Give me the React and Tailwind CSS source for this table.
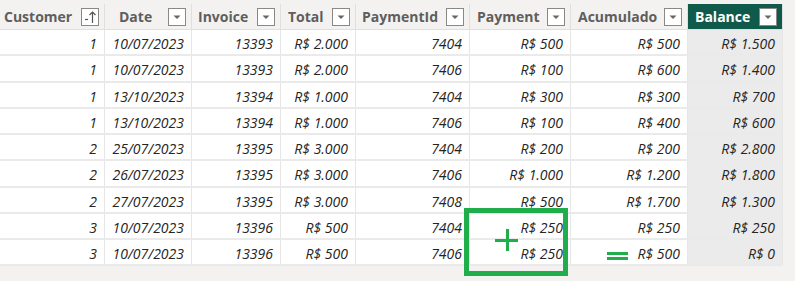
const cols = [
  { name: "Customer", w: 105, pl: "pl-[4px]", sort: true },
  { name: "Date", w: 87, pl: "pl-[14px]" },
  { name: "Invoice", w: 89, pl: "pl-[6px]" },
  { name: "Total", w: 75, pl: "pl-[7px]" },
  { name: "PaymentId", w: 114, pl: "pl-[6px]" },
  { name: "Payment", w: 101, pl: "pl-[7px]" },
  { name: "Acumulado", w: 117, pl: "pl-[7px]" },
  { name: "Balance", w: 95, pl: "pl-[7px]", active: true },
];

const rows = [
  ["1", "10/07/2023", "13393", "R$ 2.000", "7404", "R$ 500", "R$ 500", "R$ 1.500"],
  ["1", "10/07/2023", "13393", "R$ 2.000", "7406", "R$ 100", "R$ 600", "R$ 1.400"],
  ["1", "13/10/2023", "13394", "R$ 1.000", "7404", "R$ 300", "R$ 300", "R$ 700"],
  ["1", "13/10/2023", "13394", "R$ 1.000", "7406", "R$ 100", "R$ 400", "R$ 600"],
  ["2", "25/07/2023", "13395", "R$ 3.000", "7404", "R$ 200", "R$ 200", "R$ 2.800"],
  ["2", "26/07/2023", "13395", "R$ 3.000", "7406", "R$ 1.000", "R$ 1.200", "R$ 1.800"],
  ["2", "27/07/2023", "13395", "R$ 3.000", "7408", "R$ 500", "R$ 1.700", "R$ 1.300"],
  ["3", "10/07/2023", "13396", "R$ 500", "7404", "R$ 250", "R$ 250", "R$ 250"],
  ["3", "10/07/2023", "13396", "R$ 500", "7406", "R$ 250", "R$ 500", "R$ 0"],
];

function FilterBox({ sort }) {
  return (
    <div className="w-[18px] h-[18px] bg-white border border-[#8a8886] flex items-center justify-center shrink-0">
      {sort ? (
        <svg width="16" height="16" viewBox="0 0 16 16">
          <path d="M3 10.5h3" stroke="#555" strokeWidth="1.2" />
          <path d="M10.5 14V3M7.5 6l3-3 3 3" stroke="#555" strokeWidth="1.2" fill="none" />
        </svg>
      ) : (
        <svg width="10" height="10" viewBox="0 0 10 10">
          <path d="M1.5 3.5h7l-3.5 3.5z" fill="#666" />
        </svg>
      )}
    </div>
  );
}

export default function App() {
  return (
    <div className="relative w-[795px] h-[281px] bg-[#f3f2f1] overflow-hidden" style={{ fontFamily: "'Open Sans', 'Liberation Sans', sans-serif" }}>
      <div className="w-[783px] flex flex-col">
        {/* header */}
        <div className="flex h-[30px] pt-[4px] bg-[#f3f2f1] border-b border-[#e1dfdd]">
          {cols.map((c) => (
            <div
              key={c.name}
              style={{ width: c.w }}
              className={
                "flex items-center justify-between pr-[5px] border-r border-[#e1dfdd] " +
                c.pl +
                (c.active ? " bg-[#0f5a4a] text-white" : " text-[#605e5c]")
              }
            >
              <span className="text-[14px] font-bold leading-none">{c.name}</span>
              <FilterBox sort={c.sort} />
            </div>
          ))}
        </div>

        {/* body */}
        {rows.map((r, ri) => (
          <div key={ri} className="flex h-[26.25px] border-b-2 border-[#eaeaea]">
            {r.map((v, ci) => (
              <div
                key={ci}
                style={{ width: cols[ci].w }}
                className={
                  "flex items-center justify-end pt-[3px] pr-[7px] text-[14px] italic text-[#252423] border-r border-[#e6e6e6] " +
                  (ci === 7 ? "bg-[#ebebeb]" : "bg-white")
                }
              >
                {v}
              </div>
            ))}
          </div>
        ))}
      </div>

      {/* highlight overlay */}
      <div className="absolute left-[464px] top-[208px] w-[104px] h-[68px] border-[5px] border-[#20ad4b]" />
      <div className="absolute left-[495px] top-[238.5px] w-[23px] h-[3px] bg-[#20ad4b]" />
      <div className="absolute left-[505.5px] top-[229px] w-[3px] h-[22px] bg-[#20ad4b]" />
      <div className="absolute left-[607px] top-[252px] w-[21px] h-[3px] bg-[#20ad4b]" />
      <div className="absolute left-[607px] top-[257px] w-[21px] h-[3px] bg-[#20ad4b]" />
    </div>
  );
}
